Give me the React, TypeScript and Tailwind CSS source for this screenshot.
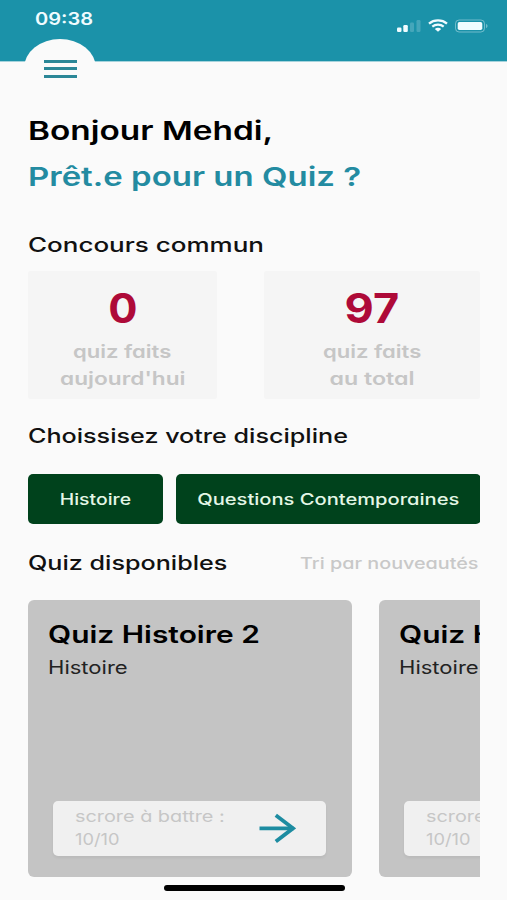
import React from 'react';
import clsx from 'clsx';

interface TextProps {
  children: React.ReactNode;
  className?: string;
}

interface Quiz {
  id: number;
  title: string;
  discipline: string;
  score: string;
}

const STATS = [
  {
    value: '0',
    lines: ['quiz faits', "aujourd'hui"],
    width: 'w-[189px]',
    scales: ['scale-x-[1.06]', 'scale-x-[1.225]', 'scale-x-[1.26]'],
  },
  {
    value: '97',
    lines: ['quiz faits', 'au total'],
    width: 'w-[216px]',
    scales: ['scale-x-[1.1]', 'scale-x-[1.225]', 'scale-x-[1.29]'],
  },
];

const QUIZZES: Quiz[] = [
  { id: 1, title: 'Quiz Histoire 2', discipline: 'Histoire', score: '10/10' },
  { id: 2, title: 'Quiz H', discipline: 'Histoire', score: '10/10' },
];

// Wide lettering, each use picks its own stretch and origin
const Text = ({ children, className }: TextProps) => (
  <span className={clsx('block w-fit whitespace-nowrap', className)}>{children}</span>
);

const StatusBar = () => (
  <div className="flex items-start justify-between pl-[35px] pr-[19px] pt-[10px] text-[#f0fcff]">
    <Text className="origin-left scale-x-[1.18] text-[17px] leading-[18px] font-semibold">09:38</Text>
    <div className="flex items-center gap-[7px] pt-[9px]">
      <svg width="24" height="14" viewBox="0 0 24 14" fill="currentColor">
        <rect x="0" y="8.5" width="4.5" height="4.5" rx="1.2" />
        <rect x="6.3" y="6" width="4.5" height="7" rx="1.2" />
        <rect x="13" y="3.5" width="4" height="9.5" rx="1.2" opacity="0.2" />
        <rect x="19.5" y="1" width="4" height="12" rx="1.2" opacity="0.2" />
      </svg>
      <svg width="20" height="14" viewBox="0 0 20 14" fill="none" stroke="currentColor">
        <path d="M1 4.6C6 .4 14 .4 19 4.6" strokeWidth="2.3" />
        <path d="M4.3 7.6c3.2-2.7 8.2-2.7 11.4 0" strokeWidth="2.2" />
        <path d="M6.8 9.9c1.8-1.4 4.6-1.4 6.4 0L10 12.8z" fill="currentColor" stroke="none" />
      </svg>
      <svg width="33" height="14" viewBox="0 0 33 14" fill="none">
        <rect x=".5" y="1" width="29" height="12" rx="3.6" stroke="currentColor" opacity="0.4" />
        <rect x="2.7" y="2.9" width="24.6" height="8.2" rx="1.8" fill="currentColor" />
        <path d="M31 5c2 .6 2 3.4 0 4z" fill="currentColor" opacity="0.4" />
      </svg>
    </div>
  </div>
);

const MenuButton = () => (
  <button className="absolute left-[24px] top-[39px] flex h-[58px] w-[72px] flex-col items-center gap-[4.5px] rounded-[50%] bg-[#fafafa] pt-[20.5px]">
    <span className="h-[3px] w-[33px] bg-[#2b8797]" />
    <span className="h-[3px] w-[33px] bg-[#2b8797]" />
    <span className="h-[3px] w-[33px] bg-[#2b8797]" />
  </button>
);

const QuizCard = ({ quiz }: { quiz: Quiz }) => (
  <div className="flex h-[277px] w-[324px] shrink-0 flex-col justify-between rounded-[6px] bg-[#c4c4c4] pb-[21px] pl-[20px] pr-[26px] pt-[20px]">
    <div>
      <Text className="origin-left scale-x-[1.247] text-[24px] leading-[30px] font-semibold text-black">{quiz.title}</Text>
      <Text className="mt-[6px] origin-left scale-x-[1.225] text-[18px] leading-[24px] text-[#222]">
        {quiz.discipline}
      </Text>
    </div>
    <div className="ml-[5px] flex h-[55px] items-center justify-between rounded-[5px] bg-[#f0f0f0] pl-[22px] pr-[30px] pb-[2px] shadow-[0_2px_3px_rgba(0,0,0,0.05)]">
      <div className="text-[16px] leading-[23px] text-[#c6c6c6]">
        <Text className="origin-left scale-x-[1.24]">scrore à battre :</Text>
        <Text className="origin-left scale-x-[1.14]">{quiz.score}</Text>
      </div>
      <svg width="38" height="32" viewBox="0 0 38 32" fill="none" stroke="#1d8ca1" strokeWidth="3.8">
        <path d="M1.5 16.3h34" />
        <path d="M17.8 3.2 35 16.3 17.8 29.4" />
      </svg>
    </div>
  </div>
);

const App = () => {
  return (
    <div className="h-[900px] w-[507px] overflow-hidden bg-[#fafafa] font-['Inter',sans-serif] [font-feature-settings:'cv11']">
      <header className="relative h-[61px] bg-[#1b92a9] shadow-[0_1px_0_#a5d3dc]">
        <StatusBar />
        <MenuButton />
      </header>

      <main className="flex flex-col pl-[28px] pr-[27px] text-[#111]">
        <h1 className="mt-[47px] text-[26px] leading-[45px] font-semibold">
          <Text className="origin-left scale-x-[1.284] text-black">Bonjour Mehdi,</Text>
          <Text className="mt-px origin-left scale-x-[1.268] text-[#238ba1]">Prêt.e pour un Quiz ?</Text>
        </h1>

        <h2 className="mt-[34px] text-[20px] leading-6 font-medium">
          <Text className="origin-left scale-x-[1.3]">Concours commun</Text>
        </h2>
        <div className="mt-[14px] flex justify-between">
          {STATS.map(stat => (
            <div
              key={stat.value}
              className={clsx('flex h-[128px] flex-col items-center rounded-[3px] bg-[#f5f5f5] pt-[14px]', stat.width)}
            >
              <Text className={clsx('text-[41px] leading-[46px] font-bold text-[#ae0a38]', stat.scales[0])}>
                {stat.value}
              </Text>
              <div className="mt-[8px] flex flex-col items-center text-[18px] leading-[26.5px] font-semibold text-[#c6c6c6]">
                <Text className={stat.scales[1]}>{stat.lines[0]}</Text>
                <Text className={stat.scales[2]}>{stat.lines[1]}</Text>
              </div>
            </div>
          ))}
        </div>

        <h2 className="mt-[25px] text-[20px] leading-6 font-medium">
          <Text className="origin-left scale-x-[1.257]">Choissisez votre discipline</Text>
        </h2>
        <div className="mt-[26px] flex gap-[13px] overflow-hidden text-[16px] font-medium text-[#e4f7e6]">
          <button className="flex h-[50px] w-[135px] shrink-0 items-center justify-center rounded-[5px] bg-[#00421c]">
            <Text className="scale-x-[1.21]">Histoire</Text>
          </button>
          <button className="flex h-[50px] w-[305px] shrink-0 items-center justify-center rounded-[5px] bg-[#00421c]">
            <Text className="scale-x-[1.257]">Questions Contemporaines</Text>
          </button>
        </div>

        <div className="mt-[27px] flex h-6 items-center justify-between">
          <h2 className="text-[20px] leading-6 font-medium">
            <Text className="origin-left scale-x-[1.257]">Quiz disponibles</Text>
          </h2>
          <Text className="mr-[2px] origin-right scale-x-[1.235] text-[16px] leading-[22px] font-medium text-[#c8c8c8]">
            Tri par nouveautés
          </Text>
        </div>
        <div className="mt-[25px] flex gap-[27px] overflow-hidden">
          {QUIZZES.map(quiz => (
            <QuizCard key={quiz.id} quiz={quiz} />
          ))}
        </div>
      </main>

      <div className="ml-[164px] mt-[8px] h-[6px] w-[181px] rounded-full bg-black" />
    </div>
  );
};

export default App;
